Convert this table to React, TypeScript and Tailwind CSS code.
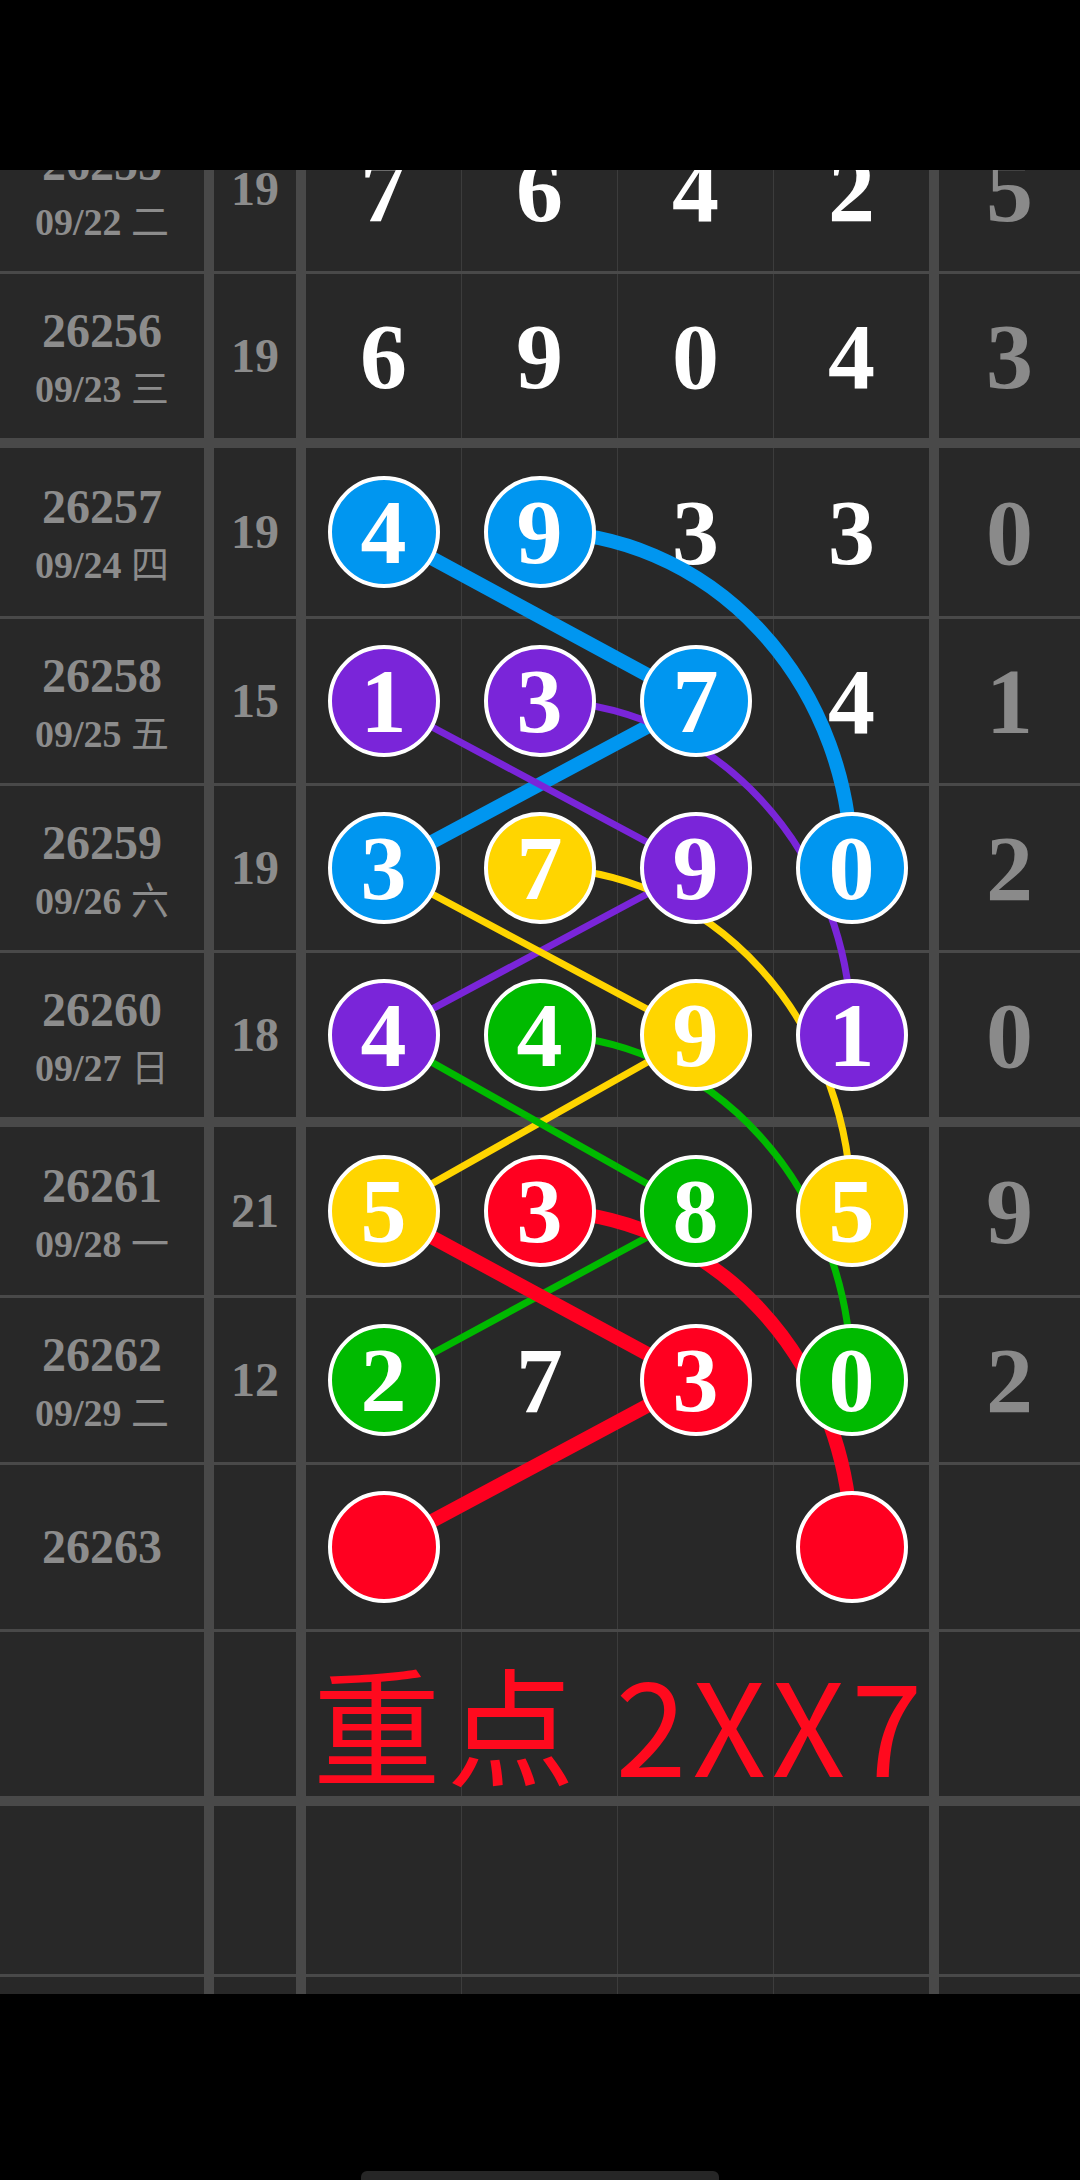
type Color = 'blue' | 'purple' | 'yellow' | 'green' | 'red';
type Cell = string | { n: string; c: Color };
type Kind = 'first' | 'mid' | 'last';

type Row = {
  id: string;
  kind: Kind;
  date?: string;
  wd?: string;
  sum?: string;
  d?: Cell[];
  last?: string;
  note?: string;
};

const rows: Row[] = [
  { id: '26255', kind: 'mid', date: '09/22', wd: '二', sum: '19', d: ['7', '6', '4', '2'], last: '5' },
  { id: '26256', kind: 'last', date: '09/23', wd: '三', sum: '19', d: ['6', '9', '0', '4'], last: '3' },
  {
    id: '26257', kind: 'first', date: '09/24', wd: '四', sum: '19',
    d: [{ n: '4', c: 'blue' }, { n: '9', c: 'blue' }, '3', '3'], last: '0',
  },
  {
    id: '26258', kind: 'mid', date: '09/25', wd: '五', sum: '15',
    d: [{ n: '1', c: 'purple' }, { n: '3', c: 'purple' }, { n: '7', c: 'blue' }, '4'], last: '1',
  },
  {
    id: '26259', kind: 'mid', date: '09/26', wd: '六', sum: '19',
    d: [{ n: '3', c: 'blue' }, { n: '7', c: 'yellow' }, { n: '9', c: 'purple' }, { n: '0', c: 'blue' }], last: '2',
  },
  {
    id: '26260', kind: 'last', date: '09/27', wd: '日', sum: '18',
    d: [{ n: '4', c: 'purple' }, { n: '4', c: 'green' }, { n: '9', c: 'yellow' }, { n: '1', c: 'purple' }], last: '0',
  },
  {
    id: '26261', kind: 'first', date: '09/28', wd: '一', sum: '21',
    d: [{ n: '5', c: 'yellow' }, { n: '3', c: 'red' }, { n: '8', c: 'green' }, { n: '5', c: 'yellow' }], last: '9',
  },
  {
    id: '26262', kind: 'mid', date: '09/29', wd: '二', sum: '12',
    d: [{ n: '2', c: 'green' }, '7', { n: '3', c: 'red' }, { n: '0', c: 'green' }], last: '2',
  },
  { id: '26263', kind: 'mid', d: [{ n: '', c: 'red' }, '', '', { n: '', c: 'red' }] },
  { id: '', kind: 'last', note: '重点 2XX7' },
  { id: '', kind: 'first' },
  { id: '', kind: 'mid' },
];

const rowCls: Record<Kind, string> = {
  first: 'h-[171px] border-b-[3px]',
  mid: 'h-[167px] border-b-[3px]',
  last: 'h-[174px] border-b-[10px]',
};
const inner: Record<Kind, number> = { first: 168, mid: 164, last: 164 };
const outer: Record<Kind, number> = { first: 171, mid: 167, last: 174 };

const ballBg: Record<Color, string> = {
  blue: 'bg-[#0096f0]',
  purple: 'bg-[#7a25d9]',
  yellow: 'bg-[#ffd500]',
  green: 'bg-[#00ba00]',
  red: 'bg-[#ff0020]',
};
const stroke: Record<Color, string> = {
  blue: '#0096f0',
  purple: '#7a25d9',
  yellow: '#ffd500',
  green: '#00ba00',
  red: '#ff0020',
};

// centres of the four digit columns
const X = [383.5, 539.5, 695.5, 851.5];

// row centre y, keyed by issue number
const Y: Record<string, number> = {};
let acc = 0;
for (const r of rows) {
  if (r.id) Y[r.id] = acc + inner[r.kind] / 2;
  acc += outer[r.kind];
}
const total = acc;

// each colour: straight, arc, straight over three issues
const chains: { c: Color; w: number; r: [string, string, string] }[] = [
  { c: 'blue', w: 14, r: ['26257', '26258', '26259'] },
  { c: 'purple', w: 7, r: ['26258', '26259', '26260'] },
  { c: 'yellow', w: 7, r: ['26259', '26260', '26261'] },
  { c: 'green', w: 7, r: ['26260', '26261', '26262'] },
  { c: 'red', w: 14, r: ['26261', '26262', '26263'] },
];

const serif = "font-['Liberation_Serif','Noto_Sans_CJK_SC',serif]";

function Digit({ cell }: { cell: Cell }) {
  if (typeof cell === 'string') {
    return <span className={`${serif} text-[94px] font-bold leading-none text-white`}>{cell}</span>;
  }
  return (
    <div
      className={`relative z-20 flex h-[112px] w-[112px] items-center justify-center rounded-full border-4 border-white ${ballBg[cell.c]}`}
    >
      <span className={`${serif} text-[92px] font-bold leading-none text-white`}>{cell.n}</span>
    </div>
  );
}

function Lines() {
  return (
    <svg className="pointer-events-none absolute left-0 top-0 z-10" width={1080} height={total}>
      {chains.map(({ c, w, r }) => {
        const [a, b, d] = r.map((k) => Y[k]);
        return (
          <g key={c} stroke={stroke[c]} strokeWidth={w} fill="none" strokeLinecap="round">
            <line x1={X[0]} y1={a} x2={X[2]} y2={b} />
            <path d={`M ${X[1]} ${a} A ${X[3] - X[1]} ${d - a} 0 0 1 ${X[3]} ${d}`} />
            <line x1={X[2]} y1={b} x2={X[0]} y2={d} />
          </g>
        );
      })}
    </svg>
  );
}

function TableRow({ row }: { row: Row }) {
  const d = row.d ?? ['', '', '', ''];
  return (
    <div className={`flex border-[#494949] bg-[#282828] ${rowCls[row.kind]}`}>
      <div className="flex w-[214px] flex-col items-center justify-center border-r-[10px] border-[#494949] pt-[8px] text-[#8c8c8c]">
        {row.id && <div className={`${serif} text-[48px] font-bold leading-[52px]`}>{row.id}</div>}
        {row.date && (
          <div className={`${serif} mt-[6px] text-[38px] font-bold leading-[52px]`}>
            {row.date} <span className="font-normal">{row.wd}</span>
          </div>
        )}
        {!row.date && row.id && <div className="h-[8px]" />}
      </div>
      <div className="flex w-[92px] items-center justify-center border-r-[10px] border-[#494949]">
        <span className={`${serif} text-[48px] font-bold leading-none text-[#8c8c8c]`}>{row.sum}</span>
      </div>
      <div className="relative flex">
        {d.map((cell, i) => (
          <div
            key={i}
            className={
              i < 3
                ? 'flex w-[156px] items-center justify-center border-r border-[#3c3c3c]'
                : 'flex w-[165px] items-center justify-center border-r-[10px] border-[#494949]'
            }
          >
            <Digit cell={cell} />
          </div>
        ))}
        {row.note && (
          <div className="absolute inset-y-0 left-0 right-[10px] z-20 flex items-center justify-center pl-[6px] pt-[16px]">
            <span className="font-['Noto_Sans_CJK_SC',sans-serif] text-[128px] leading-none tracking-[6px] text-[#ff0a1e]">
              {row.note}
            </span>
          </div>
        )}
      </div>
      <div className="flex flex-1 items-center justify-center">
        <span className={`${serif} text-[94px] font-bold leading-none text-[#8a8a8a]`}>{row.last}</span>
      </div>
    </div>
  );
}

export default function App() {
  return (
    <div className="flex h-[2180px] w-[1080px] flex-col bg-black">
      <div className="h-[170px] shrink-0 bg-black" />
      <div className="h-[1824px] shrink-0 overflow-hidden bg-[#282828]">
        <div className="relative -mt-[63px]">
          {rows.map((r, i) => (
            <TableRow key={i} row={r} />
          ))}
          <Lines />
        </div>
      </div>
      <div className="flex flex-1 items-end justify-center">
        <div className="h-[9px] w-[358px] rounded-t-[6px] bg-[#262626]" />
      </div>
    </div>
  );
}
